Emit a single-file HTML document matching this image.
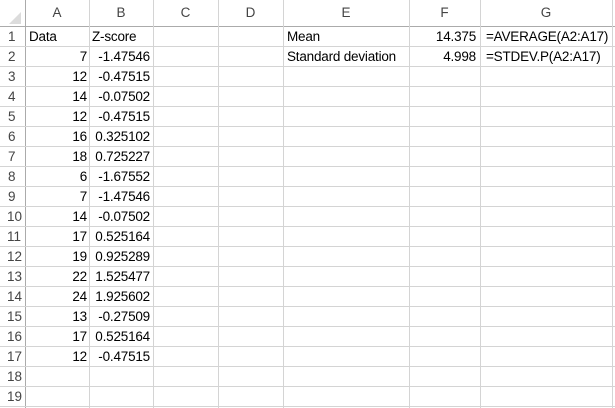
<!DOCTYPE html>
<html><head><meta charset="utf-8"><style>
html,body{margin:0;padding:0;background:#fff;width:615px;height:408px;overflow:hidden}
body{position:relative;font-family:"Liberation Sans",sans-serif;font-size:13.5px;color:#000}
.v{position:absolute;top:0;width:1px;height:408px;background:#d4d4d4}
.h{position:absolute;left:0;height:1px;width:615px;background:#d4d4d4}
.t{position:absolute;line-height:20px;white-space:nowrap;letter-spacing:-0.2px}
.ch{position:absolute;top:5px;line-height:16px;text-align:center;color:#444}
.rh{position:absolute;left:0;width:25px;text-align:left;padding-left:8px;box-sizing:border-box;line-height:20px;color:#444}
.r{text-align:right}
</style></head><body>
<div style="position:absolute;left:0;top:0;width:615px;height:26px;background:#fff"></div>
<svg style="position:absolute;left:9px;top:12px" width="12" height="12"><polygon points="12,0 12,12 0,12" fill="#dcdcdc"/></svg>
<div class="h" style="top:26px;background:#ababab"></div>
<div class="v" style="left:25px;background:#ababab"></div>
<div class="v" style="left:89px"></div><div class="v" style="left:153px"></div><div class="v" style="left:218px"></div><div class="v" style="left:283px"></div><div class="v" style="left:409px"></div><div class="v" style="left:480px"></div><div class="v" style="left:612px"></div>
<div class="ch" style="left:25px;width:64px">A</div><div class="ch" style="left:89px;width:64px">B</div><div class="ch" style="left:153px;width:65px">C</div><div class="ch" style="left:218px;width:65px">D</div><div class="ch" style="left:283px;width:126px">E</div><div class="ch" style="left:409px;width:71px">F</div><div class="ch" style="left:480px;width:132px">G</div>
<div id="g"></div>
<script>
var A=["Data",7,12,14,12,16,18,6,7,14,17,19,22,24,13,17,12,"",""];
var B=["Z-score","-1.47546","-0.47515","-0.07502","-0.47515","0.325102","0.725227","-1.67552","-1.47546","-0.07502","0.525164","0.925289","1.525477","1.925602","-0.27509","0.525164","-0.47515","",""];
var h="";
for(var i=0;i<19;i++){var y=27+20*i;
h+='<div class="h" style="top:'+(y+19)+'px"></div>';
h+='<div class="rh" style="top:'+y+'px;'+(i>=9?'padding-left:7px':'')+'">'+(i+1)+'</div>';
if(i==0){h+='<div class="t" style="left:29px;top:'+y+'px">Data</div><div class="t" style="left:92px;top:'+y+'px">Z-score</div>';}
else{h+='<div class="t r" style="left:89px;width:0;top:'+y+'px"><span style="position:absolute;right:2px">'+A[i]+'</span></div>';
h+='<div class="t r" style="left:153px;width:0;top:'+y+'px"><span style="position:absolute;right:3px">'+B[i]+'</span></div>';}
}
document.getElementById('g').innerHTML=h;
</script>
<div class="t" style="left:287px;top:27px">Mean</div>
<div class="t" style="left:287px;top:47px">Standard deviation</div>
<div class="t" style="left:409px;width:67px;text-align:right;top:27px">14.375</div>
<div class="t" style="left:409px;width:67px;text-align:right;top:47px">4.998</div>
<div class="t" style="left:486px;top:27px">=AVERAGE(A2:A17)</div>
<div class="t" style="left:486px;top:47px">=STDEV.P(A2:A17)</div>
</body></html>
